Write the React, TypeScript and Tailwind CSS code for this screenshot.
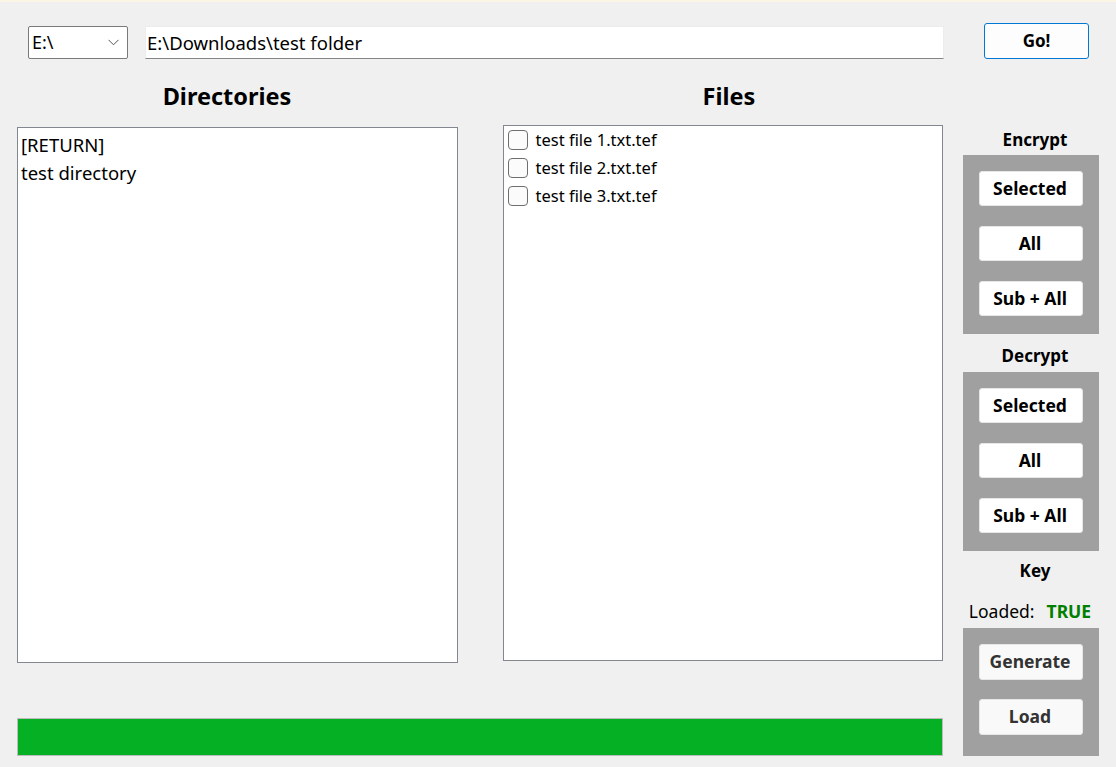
import React from 'react';

const font = { fontFamily: '"Noto Sans", "Open Sans", sans-serif' };

interface PanelButtonProps {
  label: string;
  muted?: boolean;
  tall?: boolean;
}

const PanelButton: React.FC<PanelButtonProps> = ({ label, muted, tall }) => (
  <button
    className={`w-[104px] ${tall ? 'h-[36px]' : 'h-[35px]'} rounded-[3px] border border-[#e6e6e6] text-[17.5px] font-bold leading-none pr-[2px] ${
      muted ? 'bg-[#f9f9f9] text-[#333333]' : 'bg-white text-black'
    }`}
  >
    {label}
  </button>
);

const ButtonPanel: React.FC<{ labels: string[]; muted?: boolean; gap: string; pad: string }> = ({
  labels,
  muted,
  gap,
  pad,
}) => (
  <div className={`w-[136px] bg-[#a0a0a0] flex flex-col items-center ${gap} ${pad}`}>
    {labels.map((l) => (
      <PanelButton key={l} label={l} muted={muted} tall={muted} />
    ))}
  </div>
);

const files = ['test file 1.txt.tef', 'test file 2.txt.tef', 'test file 3.txt.tef'];

export default function App() {
  return (
    <div className="w-[1116px] h-[767px] bg-[#f0f0f0] overflow-hidden text-black" style={font}>
      <div className="h-[2px] bg-[#fbf5e3]" />

      {/* top row */}
      <div className="flex items-start pl-[28px] pt-[21px]">
        <div className="mt-[3px] w-[100px] h-[33px] bg-white border border-[#7a7a7a] rounded-[2px] flex items-center justify-between pl-[3px] pr-[8px]">
          <span className="text-[18px]">E:\</span>
          <svg width="11" height="7" viewBox="0 0 11 7" fill="none">
            <path d="M0.5 0.8 L5.5 5.8 L10.5 0.8" stroke="#555" strokeWidth="1" />
          </svg>
        </div>
        <div className="mt-[3px] ml-[17px] w-[799px] h-[33px] bg-white border border-[#ececec] border-b-[#868686] flex items-center pl-[1px]">
          <span className="text-[18.5px]">E:\Downloads\test folder</span>
        </div>
        <button className="ml-[40px] w-[105px] h-[36px] bg-[#fdfdfd] border border-[#0078d4] rounded-[3px] text-[17px] font-bold">
          Go!
        </button>
      </div>

      <div className="flex pl-[17px]">
        {/* left area */}
        <div className="w-[926px] flex flex-col">
          <div className="flex h-[66px]">
            <div className="w-[420px] flex items-center justify-center pt-[10px]">
              <h2 className="text-[23.5px] font-bold">Directories</h2>
            </div>
            <div className="ml-[66px] w-[440px] flex items-center justify-center pt-[10px] pl-[12px]">
              <h2 className="text-[23.5px] font-bold">Files</h2>
            </div>
          </div>
          <div className="flex items-start">
            <div className="mt-[2px] w-[441px] h-[536px] bg-white border border-[#828790] px-[3px] pt-[3px] text-[18.5px] leading-[28px]">
              <div>[RETURN]</div>
              <div>test directory</div>
            </div>
            <div className="ml-[45px] w-[441px] h-[536px] bg-white border border-[#828790] pl-[4px] text-[16.5px]">
              {files.map((f) => (
                <div key={f} className="flex items-center h-[28px]">
                  <span className="w-[20px] h-[20px] rounded-[4px] border border-[#6e6e6e] bg-[#fbfbfb]" />
                  <span className="ml-[8px]">{f}</span>
                </div>
              ))}
            </div>
          </div>
          <div className="mt-[55px] h-[38px] w-[926px] border border-[#bcbcbc] bg-[#06b025]" />
        </div>

        {/* right column */}
        <div className="ml-[20px] w-[136px] flex flex-col">
          <div className="h-[30px] mt-[66px] flex items-center justify-center text-[17px] font-bold pl-[8px]">Encrypt</div>
          <ButtonPanel labels={['Selected', 'All', 'Sub + All']} gap="gap-[20px]" pad="pt-[16px] pb-[18px]" />
          <div className="h-[38px] pt-[6px] flex items-center justify-center text-[17px] font-bold pl-[8px]">Decrypt</div>
          <ButtonPanel labels={['Selected', 'All', 'Sub + All']} gap="gap-[20px]" pad="pt-[16px] pb-[18px]" />
          <div className="h-[37px] pt-[3px] flex items-center justify-center text-[17px] font-bold pl-[8px]">Key</div>
          <div className="h-[40px] pt-[6px] flex items-center justify-center gap-[12px] pr-[2px]">
            <span className="text-[17.5px]">Loaded:</span>
            <span className="text-[17.5px] font-bold text-[#008000]">TRUE</span>
          </div>
          <ButtonPanel labels={['Generate', 'Load']} muted gap="gap-[19px]" pad="pt-[16px] pb-[21px]" />
        </div>
      </div>
    </div>
  );
}
